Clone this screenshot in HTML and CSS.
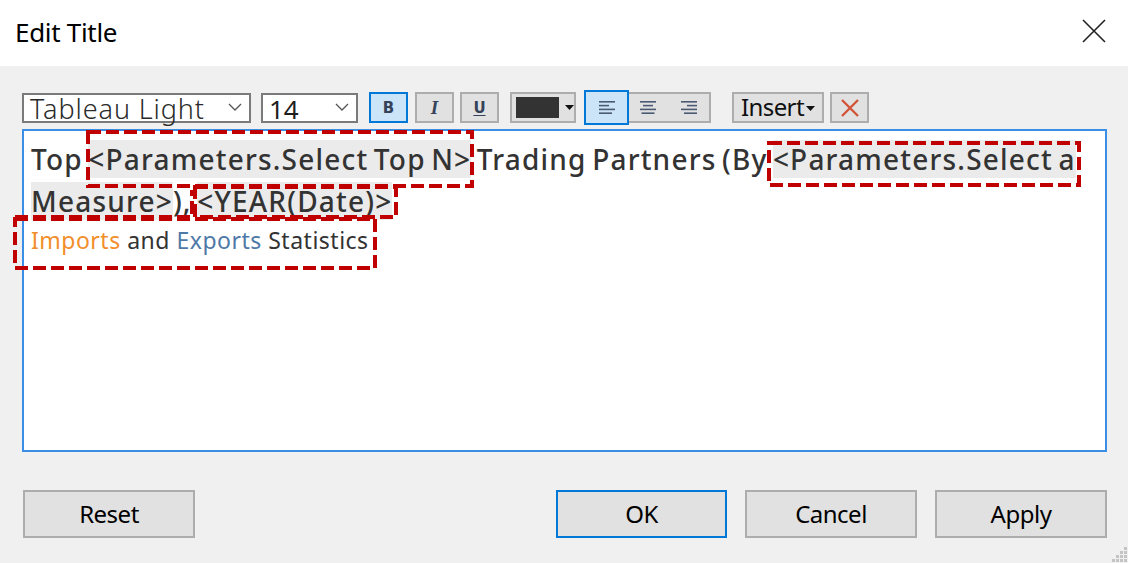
FILE: index.html
```html
<!DOCTYPE html>
<html>
<head>
<meta charset="utf-8">
<title>Edit Title</title>
<link rel="stylesheet" href="styles.css">
</head>
<body>
<div class="dialog">
  <div class="titlebar">
    <span class="title">Edit Title</span>
    <svg class="close" width="24" height="24" viewBox="0 0 24 24"><path d="M1 1L23 23M23 1L1 23" stroke="#222" stroke-width="1.6" fill="none"/></svg>
  </div>
  <div class="content">
    <div class="toolbar">
      <div class="select font-select">
        <span class="sel-text light">Tableau Light</span>
        <svg class="chev" width="14" height="8" viewBox="0 0 14 8"><path d="M1 1L7 7L13 1" stroke="#555" stroke-width="1.3" fill="none"/></svg>
      </div>
      <div class="select size-select">
        <span class="sel-text">14</span>
        <svg class="chev" width="14" height="8" viewBox="0 0 14 8"><path d="M1 1L7 7L13 1" stroke="#555" stroke-width="1.3" fill="none"/></svg>
      </div>
      <div class="tbtn active fmt-b"><span class="b">B</span></div>
      <div class="tbtn fmt-i"><span class="i">I</span></div>
      <div class="tbtn fmt-u"><span class="u">U</span></div>
      <div class="tbtn color-btn">
        <span class="swatch"></span>
        <svg width="9" height="5" viewBox="0 0 9 5"><path d="M0 0H9L4.5 5Z" fill="#111"/></svg>
      </div>
      <div class="align-group">
        <div class="aseg active">
          <svg width="16" height="13" viewBox="0 0 16 13"><g fill="#4a5a72"><rect x="0" y="0" width="16" height="1.6"/><rect x="0" y="3.8" width="10" height="1.6"/><rect x="0" y="7.6" width="16" height="1.6"/><rect x="0" y="11.4" width="13" height="1.6"/></g></svg>
        </div>
        <div class="aseg">
          <svg width="16" height="13" viewBox="0 0 16 13"><g fill="#4a5a72"><rect x="0" y="0" width="16" height="1.6"/><rect x="3" y="3.8" width="10" height="1.6"/><rect x="0" y="7.6" width="16" height="1.6"/><rect x="1.5" y="11.4" width="13" height="1.6"/></g></svg>
        </div>
        <div class="aseg">
          <svg width="16" height="13" viewBox="0 0 16 13"><g fill="#4a5a72"><rect x="0" y="0" width="16" height="1.6"/><rect x="6" y="3.8" width="10" height="1.6"/><rect x="0" y="7.6" width="16" height="1.6"/><rect x="3" y="11.4" width="13" height="1.6"/></g></svg>
        </div>
      </div>
      <div class="tbtn insert-btn">
        <span>Insert</span>
        <svg width="9" height="5" viewBox="0 0 9 5"><path d="M0 0H9L4.5 5Z" fill="#111"/></svg>
      </div>
      <div class="tbtn clear-btn">
        <svg width="20" height="20" viewBox="0 0 20 20"><path d="M2 2L18 18M18 2L2 18" stroke="#d2553a" stroke-width="2.4" fill="none"/></svg>
      </div>
    </div>
    <div class="editor">
      <div class="line big">Top <span class="field">&lt;Parameters.Select Top N&gt;</span> Trading Partners (By <span class="field">&lt;Parameters.Select a</span></div>
      <div class="line big"><span class="field">Measure&gt;</span>), <span class="field">&lt;YEAR(Date)&gt;</span></div>
      <div class="line small"><span class="orange">Imports</span> and <span class="blue">Exports</span> Statistics</div>
    </div>
    <div class="buttons">
      <div class="btn">Reset</div>
      <div class="spacer"></div>
      <div class="btn default">OK</div>
      <div class="btn">Cancel</div>
      <div class="btn">Apply</div>
    </div>
  </div>
  <svg class="grip" width="18" height="18" viewBox="0 0 18 18"><g fill="#c4c4c4"><rect x="14" y="2" width="3" height="3"/><rect x="10" y="6" width="3" height="3"/><rect x="14" y="6" width="3" height="3"/><rect x="6" y="10" width="3" height="3"/><rect x="10" y="10" width="3" height="3"/><rect x="14" y="10" width="3" height="3"/><rect x="2" y="14" width="3" height="3"/><rect x="6" y="14" width="3" height="3"/><rect x="10" y="14" width="3" height="3"/><rect x="14" y="14" width="3" height="3"/></g></svg>
  <svg class="marks" width="1128" height="563" viewBox="0 0 1128 563">
    <g fill="none" stroke="#c00000" stroke-width="4" stroke-dasharray="13 5">
      <rect x="88" y="132" width="384" height="54"/>
      <rect x="769" y="143" width="310" height="42"/>
      <path d="M15 217H192V190"/>
      <rect x="195" y="187" width="201" height="30"/>
      <rect x="15" y="219" width="360" height="49"/>
    </g>
  </svg>
</div>
</body>
</html>
```

FILE: styles.css
```css
* { box-sizing: border-box; }
html, body { margin: 0; padding: 0; }
body {
  width: 1128px;
  height: 563px;
  overflow: hidden;
  background: #f0f0f0;
  font-family: "Noto Sans", "Open Sans", sans-serif;
  color: #000;
}
.dialog {
  position: relative;
  width: 1128px;
  height: 563px;
  display: flex;
  flex-direction: column;
}
.titlebar {
  height: 66px;
  background: #fff;
  display: flex;
  align-items: center;
  justify-content: space-between;
  padding: 0 22px 0 15px;
}
.title {
  font-size: 26px;
  letter-spacing: -0.3px;
  color: #000;
  margin-top: -2px;
}
.close { margin-top: -4px; }
.content {
  padding: 26px 21px 0 22px;
  display: flex;
  flex-direction: column;
}
.toolbar {
  display: flex;
  align-items: center;
  height: 31px;
}
.select {
  height: 30px;
  background: #fff;
  border: 2px solid #7a7a7a;
  display: flex;
  align-items: center;
  justify-content: space-between;
  padding: 0 7px 0 6px;
}
.font-select { width: 229px; margin-right: 10px; }
.size-select { width: 97px; margin-right: 11px; }
.sel-text { font-size: 26px; line-height: 1; color: #1e1e1e; margin-top: 2px; }
.sel-text.light { font-weight: 300; color: #2a2a2a; font-size: 27px; letter-spacing: 0.9px; }
.chev { margin-top: -2px; }
.tbtn {
  height: 31px;
  width: 39px;
  background: #e1e1e1;
  border: 2px solid #adadad;
  display: flex;
  align-items: center;
  justify-content: center;
}
.tbtn.active { background: #cce4f7; border-color: #0078d7; }
.fmt-b { margin-right: 7px; }
.fmt-i { margin-right: 6px; }
.fmt-u { margin-right: 11px; }
.b, .u { font-family: "DejaVu Sans", sans-serif; font-weight: bold; font-size: 15px; color: #34435a; }
.u { text-decoration: underline; text-underline-offset: 2px; }
.i { font-family: "Liberation Serif", serif; font-style: italic; font-weight: bold; font-size: 19px; color: #34435a; }
.color-btn { width: 66px; margin-right: 10px; justify-content: flex-start; padding-left: 4px; gap: 6px; }
.swatch { width: 43px; height: 21px; background: #333; display: block; }
.align-group {
  width: 125px;
  height: 31px;
  border: 2px solid #adadad;
  background: #e1e1e1;
  display: flex;
  margin-right: 21px;
}
.aseg {
  flex: 1;
  display: flex;
  align-items: center;
  justify-content: center;
}
.aseg.active { background: #cce4f7; outline: 2px solid #0078d7; outline-offset: 0; margin: -2px 0 -2px -2px; }
.insert-btn {
  width: 92px;
  margin-right: 6px;
  gap: 2px;
  font-family: "Noto Sans", sans-serif;
  font-size: 24px;
  letter-spacing: -0.6px;
  color: #111;
  padding-bottom: 2px;
}
.insert-btn svg { margin-top: 3px; }
.clear-btn { width: 39px; }
.editor {
  margin-top: 6px;
  height: 323px;
  background: #fff;
  border: 2px solid #3a8ee6;
  padding: 7px 0 0 7px;
  font-family: "Noto Sans", sans-serif;
  color: #333;
}
.line { white-space: nowrap; }
.line.big { font-size: 28px; font-weight: 500; line-height: 42px; letter-spacing: 1.2px; word-spacing: -3px; }
.line.small { font-size: 23px; line-height: 34px; letter-spacing: 0.5px; color: #333; margin-top: 1px; }
.field { background: #ebebeb; }
.orange { color: #f28e2b; }
.blue { color: #4e79a7; }
.buttons {
  margin-top: 38px;
  display: flex;
  gap: 18px;
  padding-left: 1px;
}
.spacer { flex: 1; }
.btn {
  width: 172px;
  height: 48px;
  background: #e1e1e1;
  border: 2px solid #adadad;
  display: flex;
  align-items: center;
  justify-content: center;
  font-size: 24px;
  letter-spacing: -0.5px;
  color: #000;
  padding-bottom: 2px;
}
.btn.default { border-color: #0078d7; width: 171px; }
.grip { position: absolute; right: 0; bottom: 0; }
.marks { position: absolute; left: 0; top: 0; pointer-events: none; }
```
